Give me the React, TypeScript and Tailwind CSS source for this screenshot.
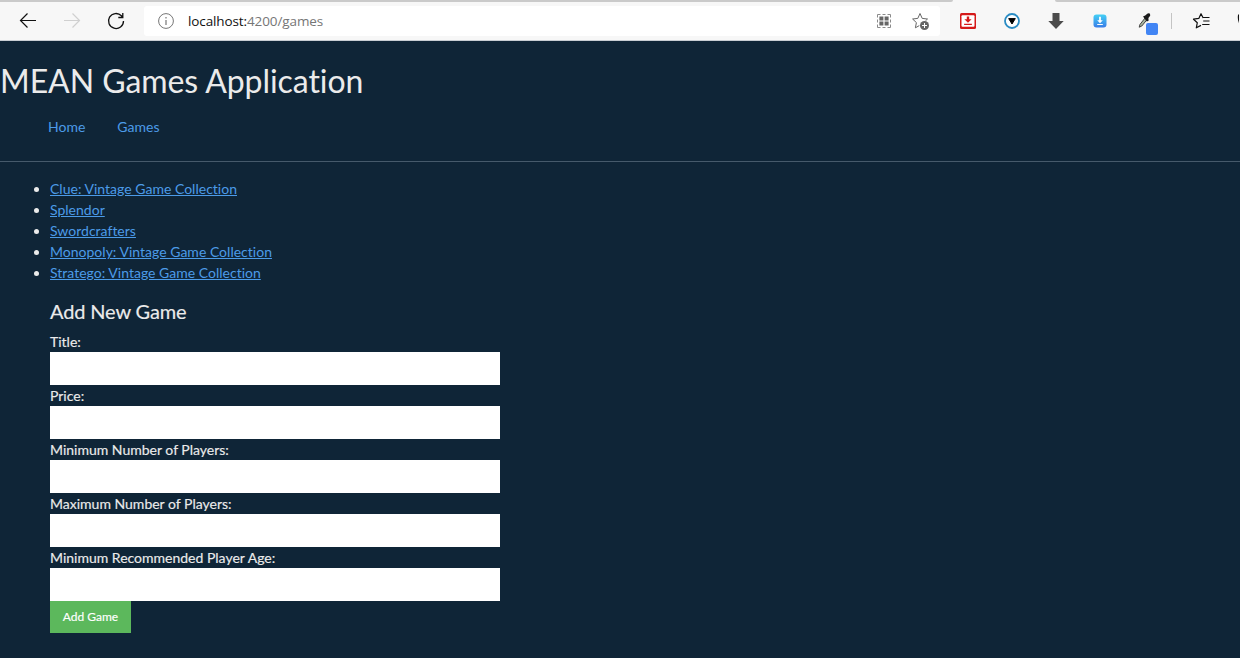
import type { ReactNode } from "react";

const games = [
  "Clue: Vintage Game Collection",
  "Splendor",
  "Swordcrafters",
  "Monopoly: Vintage Game Collection",
  "Stratego: Vintage Game Collection",
];

const fields = [
  "Title:",
  "Price:",
  "Minimum Number of Players:",
  "Maximum Number of Players:",
  "Minimum Recommended Player Age:",
];

/* A 44px toolbar slot whose drawing is centred on the origin. */
function Slot({ children }: { children: ReactNode }) {
  return (
    <svg className="h-[38px] w-11 shrink-0" viewBox="-22 -19 44 38" fill="none">
      {children}
    </svg>
  );
}

function AddressBar() {
  return (
    <div className="ml-1.5 flex h-[30px] w-[796px] shrink-0 items-center rounded-[3px] bg-white">
      <svg className="ml-[14px] h-4 w-4 shrink-0" viewBox="-8 -8 16 16" fill="none" stroke="#767676">
        <circle r="7.4" />
        <path d="M0 -1V4M0 -4V-2.6" strokeWidth="1.2" />
      </svg>
      <div className="ml-[14px] grow font-['Open_Sans',sans-serif] text-[13.5px] leading-5 tracking-[-0.11px] text-[#767676]">
        <span className="text-[#111]">localhost:</span>4200/games
      </div>
      <svg className="mr-[19px] h-4 w-4 shrink-0" viewBox="-8 -8 16 16" fill="none">
        <path d="M-6.5 -3.5V-6.5H-3.5M3.5 -6.5H6.5V-3.5M6.5 3.5V6.5H3.5M-3.5 6.5H-6.5V3.5M-1.5 -6.5H1.5M-1.5 6.5H1.5M-6.5 -1.5V1.5M6.5 -1.5V1.5" stroke="#8a8a8a" />
        <path d="M-4.6 -4.5H-.6V-.6H-4.6ZM.6 -4.5H4.6V-.6H.6ZM-4.6 .6H-.6V4.5H-4.6ZM.6 .6H4.6V4.5H.6Z" fill="#666" />
      </svg>
      <svg className="mr-[9px] h-5 w-5 shrink-0" viewBox="-10 -10 20 20" fill="none">
        <path d="M-1 -7.5L1.2 -2.6L6.5 -2L2.6 1.6L3.6 6.5L-1 4.2L-5.6 6.8L-4.6 1.6L-8.4 -2L-3.2 -2.6Z" stroke="#666" strokeLinejoin="round" />
        <circle cx="3.5" cy="4.5" r="5.2" fill="#fff" />
        <circle cx="3.5" cy="4.5" r="4.5" fill="#666" />
        <path d="M1 4.5H6M3.5 2V7" stroke="#fff" />
      </svg>
    </div>
  );
}

function BrowserChrome() {
  return (
    <header className="h-[41px] w-full overflow-hidden border-b border-[#c9ced3] bg-[#f7f7f7]">
      <div className="flex h-[2px] justify-between">
        <div className="w-[953px] rounded-br-sm bg-[#cacaca]" />
        <div className="w-[185px] rounded-bl-sm bg-[#cacaca]" />
      </div>
      <div className="flex h-[38px] items-center pl-1.5">
        <Slot>
          <path d="M8 -.5H-7.5M-.5 -7.5L-7.5 -.5L-.5 6.5" stroke="#111" strokeWidth="1.2" />
        </Slot>
        <Slot>
          <path d="M-8 -.5H7.5M.5 -7.5L7.5 -.5L.5 6.5" stroke="#d0d0d0" strokeWidth="1.2" />
        </Slot>
        <Slot>
          <path d="M7.5 0A7.5 7.5 0 1 1 5.4 -5.2L6.8 -3.5M6.8 -8V-3.5H2.3" stroke="#111" strokeWidth="1.3" />
        </Slot>
        <AddressBar />
        <div className="ml-1.5 flex shrink-0 items-center">
          <Slot>
            <rect x="-8" y="-8" width="16" height="16" rx="1.5" fill="#d51a1a" />
            <rect x="-6.5" y="-5.7" width="13" height="11.4" rx="1" fill="#fff" />
            <path d="M-1.2 -4.6H1.2V-1.8H3.6L0 1.8L-3.6 -1.8H-1.2ZM-3.9 2.7H3.9V4.1H-3.9Z" fill="#d51a1a" />
          </Slot>
          <Slot>
            <circle r="7" fill="#fff" stroke="#2a8cc4" strokeWidth="1.8" />
            <path d="M-3.3 -2.4H3.3L0 3Z" fill="#000" stroke="#000" strokeLinejoin="round" />
          </Slot>
          <Slot>
            <path d="M-3.5 -8H3.5V0H7.7L0 8L-7.7 0H-3.5Z" fill="#4c4c4c" />
          </Slot>
          <Slot>
            <defs>
              <linearGradient id="download" x1="0" y1="0" x2="0" y2="1">
                <stop offset="0" stopColor="#43d0f5" />
                <stop offset="1" stopColor="#3a7de8" />
              </linearGradient>
            </defs>
            <rect x="-6.5" y="-6.5" width="13" height="13" rx="3" fill="url(#download)" />
            <path d="M0 -4.3V.5" stroke="#fff" strokeWidth="1.8" />
            <path d="M-2.8 -.8H2.8L0 2.2ZM-2.8 3H2.8V4H-2.8Z" fill="#fff" />
          </Slot>
          <Slot>
            <path d="M-4.8 6.2L-4 3.4L1.4 -3.4L3.2 -1.6L-2.2 5L-4.8 6.2Z" fill="#a7b59f" stroke="#444" />
            <path d="M-1 -4.6L1.2 -5.6L3.6 -7.4Q6.6 -8.4 6.2 -5.2L4.4 -3L4.6 -.2L2.8 .4Z" fill="#1b1b1b" />
            <rect x="2" y="2" width="12" height="12" rx="2" fill="#4285f4" />
          </Slot>
          <div className="ml-[5px] mr-[7px] h-4 w-px bg-[#c4c4c4]" />
          <Slot>
            <path d="M2.2 -3L0 -7.3L-2.2 -2.6L-7.5 -1.8L-3.7 1.7L-4.7 6.8L0 4.4" stroke="#111" strokeWidth="1.2" strokeLinejoin="round" />
            <path d="M2 -3.5H8.5M2.2 0H8.5M1.2 3.5H8.5" stroke="#111" strokeWidth="1.2" />
          </Slot>
          <svg className="h-[38px] w-4 shrink-0" viewBox="0 0 16 38" fill="none" stroke="#111" strokeWidth="1.2">
            <path d="M17 13H15.6Q14.8 18 17 22" />
          </svg>
        </div>
      </div>
    </header>
  );
}

export default function App() {
  return (
    <div className="h-[658px] w-[1240px] overflow-hidden bg-[#0f2537] font-['Lato',sans-serif] text-[14px] leading-[21px] text-[#ebebeb] [font-variant-ligatures:none]">
      <BrowserChrome />
      <main className="pt-[21px]">
        <h1 className="mb-2 h-[38px] text-[32px] leading-[38px] tracking-[-0.06px]">MEAN Games Application</h1>
        <nav className="flex h-[37px] pl-8 text-[#4c9be8]">
          <a href="#home" className="px-4 py-2">Home</a>
          <a href="#games" className="px-4 py-2">Games</a>
        </nav>
        <hr className="my-4 border-[#465a6b]" />
        <ul className="mb-4 list-disc pl-[50px]">
          {games.map((title) => (
            <li key={title}>
              <a href="#game" className="tracking-[0.01px] text-[#4c9be8] underline">{title}</a>
            </li>
          ))}
        </ul>
        <form className="ml-[50px] w-[450px]">
          <h4 className="mb-2 text-[20px] leading-6 tracking-[-0.14px] [-webkit-text-stroke:0.15px]">Add New Game</h4>
          {fields.map((field) => (
            <label key={field} className="block [-webkit-text-stroke:0.15px]">
              {field}
              <input className="block h-[33px] w-full bg-white px-3 text-[#222]" />
            </label>
          ))}
          <button type="button" className="block h-8 w-[81px] bg-[#5cb85c] text-[12px] leading-[18px] text-white [-webkit-text-stroke:0.15px]">
            Add Game
          </button>
        </form>
      </main>
    </div>
  );
}
